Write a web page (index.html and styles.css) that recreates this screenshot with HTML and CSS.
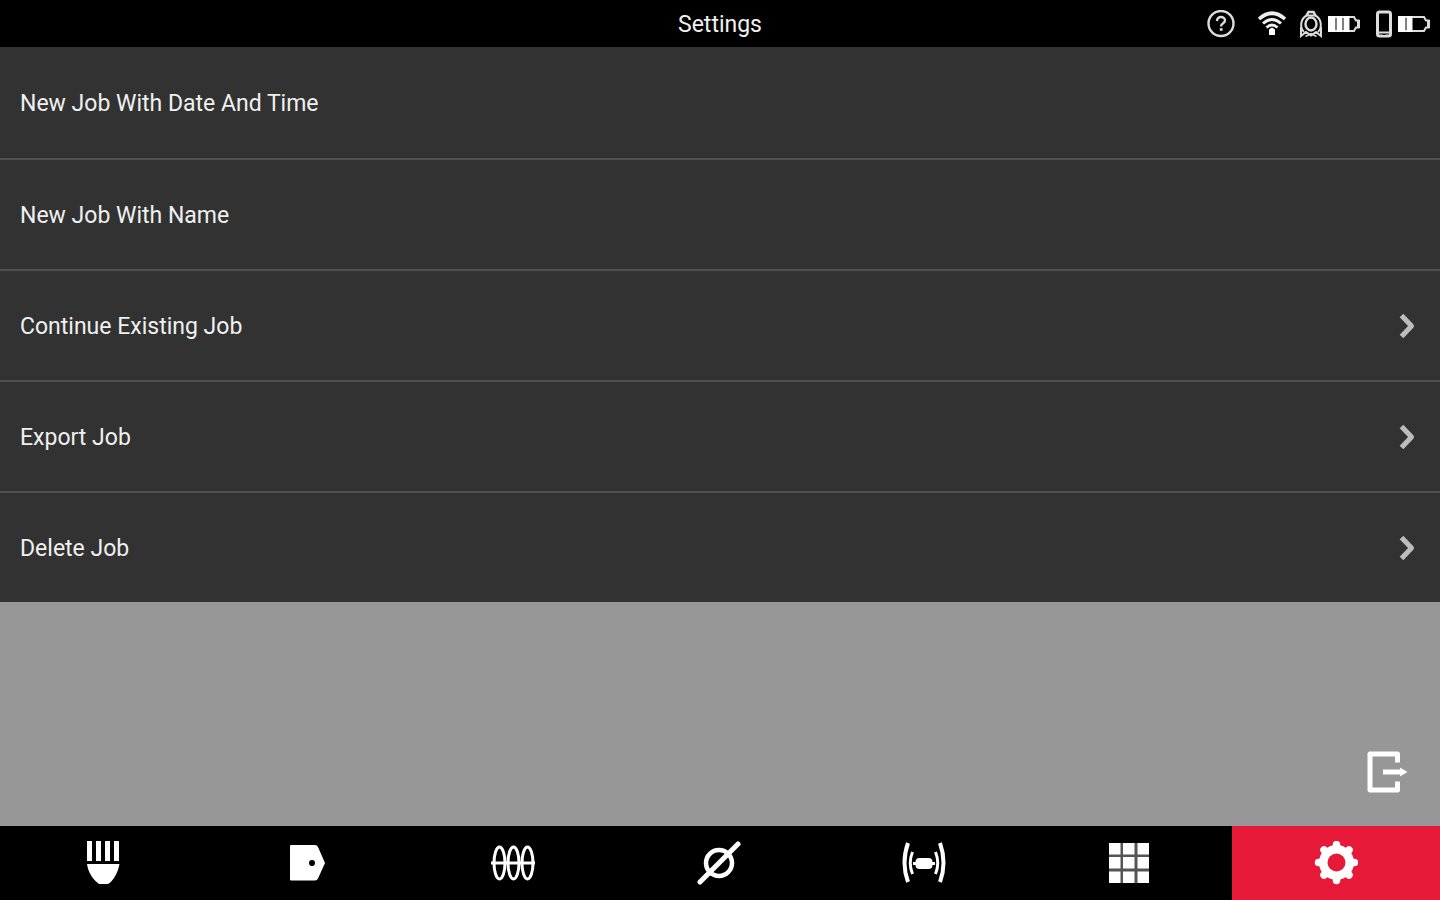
FILE: index.html
```html
<!DOCTYPE html>
<html lang="en">
  <head>
    <title>Settings</title>
    <meta charset="UTF-8" />
    <meta name="viewport" content="width=device-width, initial-scale=1" />
    <link rel="stylesheet" href="styles.css" />
  </head>

  <body>
    <header class="topBar">
      <h1 class="title">Settings</h1>
      <div class="status">
        <button class="help" type="button" aria-label="Help">
          <svg width="28" height="28" viewBox="0 0 28 28" fill="none" stroke="#ddd">
            <circle cx="14" cy="13.500" r="12.500" stroke-width="2.400" />
            <path d="M10 11c0-5.500 8-5 8-.5 0 3-4 2.500-4 6" stroke-width="2.400" />
            <path d="M12.800 19.500h2.800" stroke-width="2.600" />
          </svg>
        </button>
        <svg class="wifi" width="30" height="28" viewBox="0 0 30 28" fill="none" stroke="#eee">
          <path d="M2 9Q15-2.500 28 9" stroke-width="3.600" />
          <path d="M6 13.500Q15 5.500 24 13.500" stroke-width="3" />
          <path d="M9.500 17.500Q15 12.500 20.500 17.500" stroke-width="2.800" />
          <path d="M12 19.500l3-2 3 2V25h-6z" fill="#fff" stroke="none" />
        </svg>
        <svg class="scanner" width="24" height="28" viewBox="0 0 24 28" fill="none" stroke="#ddd" stroke-width="2">
          <path d="M7.500 5.500L9.500 2h5l2 3.500" stroke-width="2.500" />
          <path d="M5 22C0 17 2 8 8 5.500h8C22 8 24 17 19 22" />
          <ellipse cx="12" cy="14" rx="5.500" ry="6.500" stroke-width="2.400" />
          <path d="M2 17v9l5-4 5 3.500 5-3.500 5 4V17" />
          <path d="M6.500 26.500l5.500-3 5.500 3" stroke-width="1.500" />
        </svg>
        <svg class="battery" width="34" height="18" viewBox="0 0 34 18">
          <path d="M2 2h25l2 3.500h2.500v7H29L27 16H2z" fill="none" stroke="#ddd" stroke-width="2" />
          <path d="M1 1h7.500v16H1zM9.500 1h6v16h-6zM16.500 1h6v16h-6z" fill="#fff" />
          <path d="M30 5h3v8h-3z" fill="#ddd" />
        </svg>
        <svg class="phone" width="18" height="28" viewBox="0 0 18 28" fill="none" stroke="#ddd">
          <rect x="2.500" y="2" width="13" height="24" rx="2" stroke-width="3" />
          <path d="M3 22.500h12" stroke-width="2" />
          <path d="M7.500 24.500h3" stroke="#000" />
        </svg>
        <svg class="battery" width="34" height="18" viewBox="0 0 34 18">
          <path d="M2 2h25l2 3.500h2.500v7H29L27 16H2z" fill="none" stroke="#ddd" stroke-width="2" />
          <path d="M1 1h7.500v16H1zM9.500 1h6v16h-6z" fill="#fff" />
          <path d="M30 5h3v8h-3z" fill="#ddd" />
        </svg>
      </div>
    </header>

    <main class="content">
      <ul class="menu">
        <li><button class="item" type="button">New Job With Date And Time</button></li>
        <li><button class="item" type="button">New Job With Name</button></li>
        <li>
          <button class="item" type="button">
            Continue Existing Job
            <svg class="chevron" width="18" height="28" viewBox="0 0 18 28"><path d="M3.500 3.500L13.500 14l-10 10.500" /></svg>
          </button>
        </li>
        <li>
          <button class="item" type="button">
            Export Job
            <svg class="chevron" width="18" height="28" viewBox="0 0 18 28"><path d="M3.500 3.500L13.500 14l-10 10.500" /></svg>
          </button>
        </li>
        <li>
          <button class="item" type="button">
            Delete Job
            <svg class="chevron" width="18" height="28" viewBox="0 0 18 28"><path d="M3.500 3.500L13.500 14l-10 10.500" /></svg>
          </button>
        </li>
      </ul>

      <button class="exit" type="button" aria-label="Exit">
        <svg width="42" height="44" viewBox="0 0 42 44" fill="none" stroke="#fff" stroke-linejoin="round">
          <path d="M31.500 12.500V4H4v36h27.500v-8.500" stroke-width="5" />
          <path d="M17 22h17" stroke-width="5" />
          <path d="M34 17.500L41.500 22 34 26.500z" fill="#fff" stroke="none" />
        </svg>
      </button>
    </main>

    <nav class="tabs">
      <a class="tab" href="#light" aria-label="Light">
        <svg width="44" height="44" viewBox="0 0 44 44" fill="#fff">
          <path d="M6 0h5v20H6zM15 0h5v20h-5zM24 0h5v20h-5zM33 0h5v20h-5z" />
          <path d="M6 23h32.500C37 32 32 40 27 43h-9C12 39 7 31 6 23z" />
        </svg>
      </a>
      <a class="tab" href="#label" aria-label="Label">
        <svg width="44" height="44" viewBox="0 0 44 44" fill="#fff">
          <path d="M5 4h24q2 0 3 2l7 16-7 15.500q-1 2-3 2H5q-1 0-1-1V5q0-1 1-1z" />
          <circle cx="26" cy="22" r="3" fill="#000" />
        </svg>
      </a>
      <a class="tab" href="#coil" aria-label="Coil">
        <svg width="44" height="44" viewBox="0 0 44 44" fill="none" stroke="#fff" stroke-width="3">
          <ellipse cx="8.500" cy="22" rx="5.500" ry="16" />
          <ellipse cx="22.500" cy="22" rx="5.500" ry="16" />
          <ellipse cx="36.500" cy="22" rx="5.500" ry="16" />
          <path d="M0 22h44" />
        </svg>
      </a>
      <a class="tab" href="#diameter" aria-label="Diameter">
        <svg width="44" height="44" viewBox="0 0 44 44" fill="none" stroke="#fff">
          <circle cx="22" cy="22" r="13" stroke-width="4.500" />
          <path d="M3 41L41 3" stroke-width="5" stroke-linecap="round" />
        </svg>
      </a>
      <a class="tab" href="#sonde" aria-label="Sonde">
        <svg width="44" height="44" viewBox="0 0 44 44" fill="none" stroke="#fff">
          <path d="M6 2Q-1 22 6 41M38 2q7 20 0 39" stroke-width="4" />
          <path d="M10.500 11Q6 22 10.500 33M33.500 11q4.500 11 0 22" stroke-width="3" />
          <rect x="13.500" y="17" width="17" height="11" rx="4" fill="#fff" stroke="none" />
          <path d="M11 22.500h22" stroke-width="3" />
        </svg>
      </a>
      <a class="tab" href="#apps" aria-label="Apps">
        <svg width="44" height="44" viewBox="0 0 44 44" fill="#fff">
          <rect x="2" y="2" width="40" height="40" fill="#555" />
          <path d="M2 2h11.500v11.500H2zM16 2h11.500v11.500H16zM30.500 2H42v11.500H30.500z" />
          <path d="M2 16h11.500v11.500H2zM16 16h11.500v11.500H16zM30.500 16H42v11.500H30.500z" />
          <path d="M2 30.500h11.500V42H2zM16 30.500h11.500V42H16zM30.500 30.500H42V42H30.500z" />
        </svg>
      </a>
      <a class="tab active" href="#settings" aria-label="Settings" aria-current="page">
        <svg width="44" height="44" viewBox="0 0 44 44" fill="none" stroke="#fff">
          <circle cx="22.500" cy="21.500" r="13" stroke-width="9" />
          <path d="M22.500 3.500v36M4.500 21.500h36M10 9l25 25M35 9L10 34" stroke-width="7.500" stroke-linecap="round" />
          <circle cx="22.500" cy="21.500" r="9" fill="#e61938" stroke="none" />
        </svg>
      </a>
    </nav>
  </body>
</html>
```
FILE: styles.css
```css
html * {
  margin: 0;
  padding: 0;
  box-sizing: border-box;
}

body {
  display: flex;
  flex-direction: column;
  min-height: 100vh;
  margin: 0;
  background-color: #979797;
  color: #f0f0f0;
  font-family: Roboto, sans-serif;
}

button {
  background: none;
  border: none;
  color: inherit;
  font: inherit;
  cursor: pointer;
}

svg {
  display: block;
  flex: none;
}

.topBar {
  display: grid;
  grid-template-columns: 1fr auto 1fr;
  align-items: center;
  height: 47px;
  padding: 0 9px;
  background-color: #000;
}

.title {
  grid-column: 2;
  padding-top: 2px;
  font-size: 23px;
  font-weight: 400;
  line-height: 28px;
}

.status {
  display: flex;
  align-items: center;
  justify-content: flex-end;
}

.wifi {
  margin-left: 22px;
}

.scanner {
  margin-left: 12px;
}

.battery {
  margin-left: 4px;
}

.phone {
  margin-left: 14px;
}

.content {
  flex: 1;
  display: flex;
  flex-direction: column;
}

.menu {
  list-style: none;
  background-color: #323232;
}

.menu li + li {
  border-top: 2px solid #505050;
}

.item {
  display: flex;
  align-items: center;
  justify-content: space-between;
  width: 100%;
  height: 109px;
  padding: 2px 24px 0 20px;
  font-size: 23px;
  line-height: 28px;
  text-align: left;
}

.menu li:first-child .item {
  height: 111px;
}

.chevron {
  margin-bottom: 2px;
  fill: none;
  stroke: #bdbdbd;
  stroke-width: 5px;
  stroke-linejoin: round;
}

.exit {
  align-self: flex-end;
  margin: auto 32px 32px 0;
}

.tabs {
  display: grid;
  grid-template-columns: repeat(6, 1fr) 208px;
  height: 74px;
  background-color: #000;
}

.tab {
  display: flex;
  align-items: center;
  justify-content: center;
}

.tab.active {
  background-color: #e61938;
}
```
